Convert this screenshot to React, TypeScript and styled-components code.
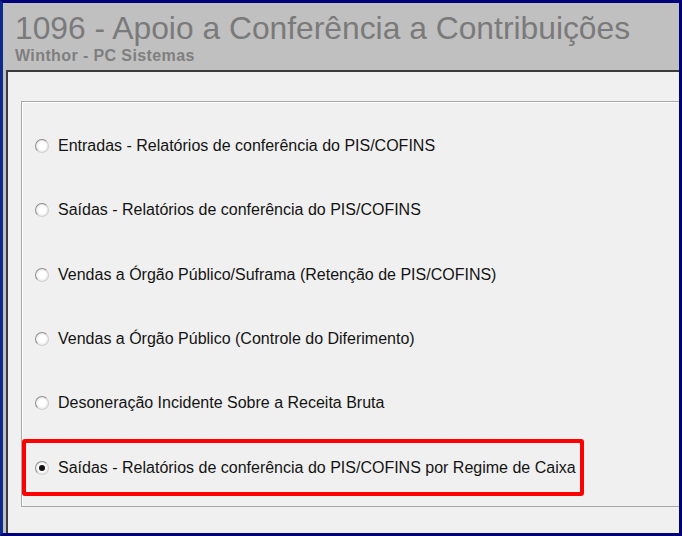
import React from "react";
import styled, { createGlobalStyle } from "styled-components";

const Global = createGlobalStyle`
  html, body { margin: 0; padding: 0; background: #000078; }
  * { box-sizing: border-box; }
`;

const Frame = styled.div`
  width: 682px;
  height: 536px;
  border: 3px solid #000078;
  border-left-color: #0b2a8c;
  background: #c0c0c0;
  display: flex;
  flex-direction: column;
  overflow: hidden;
`;

const Header = styled.header`
  height: 67px;
  padding: 7px 0 0 12px;
  flex: none;
  display: flex;
  flex-direction: column;
`;

const Title = styled.h1`
  margin: 0;
  font-family: "Liberation Sans", Arial, sans-serif;
  font-weight: 400;
  font-size: 31.8px;
  line-height: 37px;
  color: #7a7a7a;
  white-space: nowrap;
`;

const Subtitle = styled.div`
  margin-top: 0;
  font-family: "Liberation Sans", Arial, sans-serif;
  font-weight: 700;
  font-size: 16px;
  letter-spacing: 0.4px;
  line-height: 17px;
  color: #7f7f7f;
  white-space: nowrap;
`;

const Body = styled.div`
  flex: 1;
  padding-left: 3px;
  display: flex;
`;

const Panel = styled.main`
  flex: 1;
  background: #f0f0f0;
  border-left: 2px solid #3c3c3c;
  border-top: 2px solid #3c3c3c;
  padding: 29px 0 0 13px;
`;

const GroupBox = styled.fieldset`
  margin: 0;
  padding: 12px 0 0 0;
  width: 700px;
  height: 406px;
  border: 1px solid #a9a9a9;
  box-shadow: inset 1px 1px 0 #ffffff;
  display: flex;
  flex-direction: column;
`;

const Row = styled.div`
  height: 64.3px;
  flex: none;
  display: flex;
  align-items: center;
`;

const Option = styled.label<{ $highlight?: boolean }>`
  display: flex;
  align-items: center;
  gap: 9px;
  height: 57px;
  width: ${(p) => (p.$highlight ? "562px" : "auto")};
  padding-left: ${(p) => (p.$highlight ? "9px" : "13px")};
  border: ${(p) => (p.$highlight ? "4px solid #ff0000" : "none")};
  border-radius: 3px;
  font-family: "Liberation Sans", Arial, sans-serif;
  font-size: 16px;
  color: #141414;
  white-space: nowrap;
`;

const Radio = styled.span<{ $checked?: boolean }>`
  width: 14px;
  height: 14px;
  flex: none;
  border-radius: 50%;
  border: 1px solid #8f8f8f;
  border-right-color: #cfcfcf;
  border-bottom-color: #cfcfcf;
  background: radial-gradient(circle at 50% 50%, #ffffff 0 40%, #eeeeee 65%, #d6d6d6 100%);
  display: flex;
  align-items: center;
  justify-content: center;
  &::after {
    content: "";
    width: 6px;
    height: 6px;
    border-radius: 50%;
    background: ${(p) => (p.$checked ? "#111" : "transparent")};
  }
`;

const options = [
  "Entradas - Relatórios de conferência do PIS/COFINS",
  "Saídas - Relatórios de conferência do PIS/COFINS",
  "Vendas a Órgão Público/Suframa (Retenção de PIS/COFINS)",
  "Vendas a Órgão Público (Controle do Diferimento)",
  "Desoneração Incidente Sobre a Receita Bruta",
  "Saídas - Relatórios de conferência do PIS/COFINS por Regime de Caixa",
];

export default function App() {
  return (
    <>
      <Global />
      <Frame>
        <Header>
          <Title>1096 - Apoio a Conferência a Contribuições</Title>
          <Subtitle>Winthor - PC Sistemas</Subtitle>
        </Header>
        <Body>
          <Panel>
            <GroupBox>
              {options.map((o, i) => {
                const sel = i === options.length - 1;
                return (
                  <Row key={o}>
                    <Option $highlight={sel}>
                      <Radio $checked={sel} />
                      {o}
                    </Option>
                  </Row>
                );
              })}
            </GroupBox>
          </Panel>
        </Body>
      </Frame>
    </>
  );
}
